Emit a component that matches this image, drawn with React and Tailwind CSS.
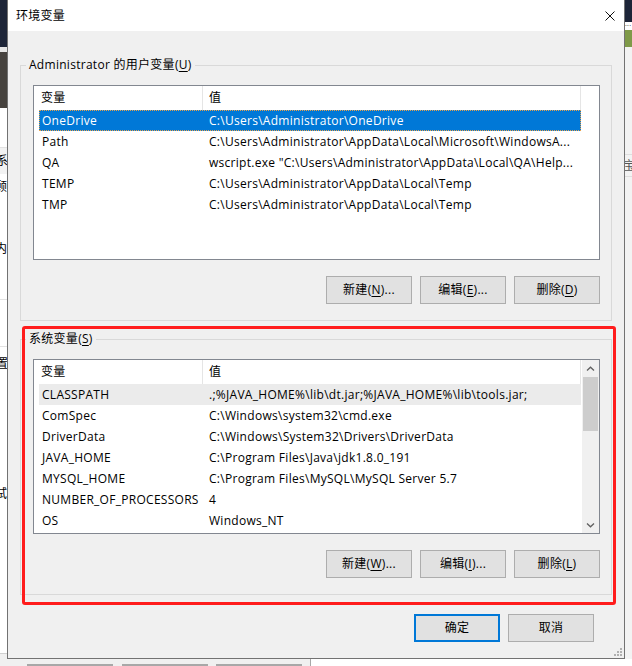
import React from 'react'

const font = "font-['Open_Sans','Noto_Sans_CJK_SC',sans-serif]"

const userVars = [
  { name: 'OneDrive', value: 'C:\\Users\\Administrator\\OneDrive' },
  { name: 'Path', value: 'C:\\Users\\Administrator\\AppData\\Local\\Microsoft\\WindowsA...' },
  { name: 'QA', value: 'wscript.exe "C:\\Users\\Administrator\\AppData\\Local\\QA\\Help...' },
  { name: 'TEMP', value: 'C:\\Users\\Administrator\\AppData\\Local\\Temp' },
  { name: 'TMP', value: 'C:\\Users\\Administrator\\AppData\\Local\\Temp' },
]

const systemVars = [
  { name: 'CLASSPATH', value: '.;%JAVA_HOME%\\lib\\dt.jar;%JAVA_HOME%\\lib\\tools.jar;' },
  { name: 'ComSpec', value: 'C:\\Windows\\system32\\cmd.exe' },
  { name: 'DriverData', value: 'C:\\Windows\\System32\\Drivers\\DriverData' },
  { name: 'JAVA_HOME', value: 'C:\\Program Files\\Java\\jdk1.8.0_191' },
  { name: 'MYSQL_HOME', value: 'C:\\Program Files\\MySQL\\MySQL Server 5.7' },
  { name: 'NUMBER_OF_PROCESSORS', value: '4' },
  { name: 'OS', value: 'Windows_NT' },
]

const Key = ({ label, k, tail = '' }) => (
  <span>
    {label}(<u className="underline-offset-2">{k}</u>){tail}
  </span>
)

const Btn = ({ children, primary }) => (
  <div
    className={
      primary
        ? 'h-[28px] w-[86px] flex items-center justify-center bg-[#e1e1e1] border-2 border-[#0078d7]'
        : 'h-[28px] w-[86px] flex items-center justify-center bg-[#e1e1e1] border border-[#adadad]'
    }
  >
    {children}
  </div>
)

const Chevron = ({ down }) => (
  <svg width="9" height="6" viewBox="0 0 9 6">
    <path
      d={down ? 'M1 1.5 L4.5 4.8 L8 1.5' : 'M1 4.5 L4.5 1.2 L8 4.5'}
      fill="none"
      stroke="#606060"
      strokeWidth="1.3"
    />
  </svg>
)

const Scrollbar = () => (
  <div className="w-[17px] bg-[#f0f0f0] flex flex-col items-center">
    <div className="h-[17px] flex items-center justify-center"><Chevron /></div>
    <div className="w-[15px] h-[54px] bg-[#cdcdcd]" />
    <div className="flex-1" />
    <div className="h-[17px] flex items-center justify-center"><Chevron down /></div>
  </div>
)

const rowClass = {
  normal: 'ml-[5px] w-[542px] h-[21px] flex items-center border border-transparent',
  selected: 'ml-[5px] w-[542px] h-[21px] flex items-center bg-[#0078d7] text-white border border-dotted border-[#e8a24c]',
  soft: 'ml-[5px] w-[542px] h-[21px] flex items-center bg-[#ebebeb] border border-transparent',
}

const VarList = ({ rows, selected, soft, scroll }) => (
  <div className="h-[175px] border border-[#828790] bg-white flex">
    <div className="flex-1 flex flex-col min-w-0">
      <div className="h-[24px] flex shrink-0">
        <div className="w-[169px] border-r border-[#e5e5e5] pl-[7px] flex items-center">变量</div>
        <div className="w-[378px] border-r border-[#e5e5e5] pl-[6px] flex items-center">值</div>
      </div>
      {rows.map((r, i) => (
        <div
          key={r.name}
          className={i === selected ? rowClass.selected : i === soft ? rowClass.soft : rowClass.normal}
        >
          <div className="w-[163px] pl-[2px] whitespace-nowrap overflow-hidden">{r.name}</div>
          <div className="flex-1 pl-[6px] whitespace-nowrap overflow-hidden">{r.value}</div>
        </div>
      ))}
    </div>
    {scroll && <Scrollbar />}
  </div>
)

const Group = ({ title, children, className = '' }) => (
  <fieldset className={`border border-[#d9d9d9] p-0 ${className}`}>
    <legend className="ml-[5px] px-[3px] leading-[16px]">{title}</legend>
    <div className="pt-[12px] pl-[12px] pr-[11px] pb-[16px] flex flex-col">{children}</div>
  </fieldset>
)

// bits of the desktop peeking out around the dialog
const LeftStrip = () => (
  <div className="w-[7px] flex flex-col overflow-hidden bg-white">
    <div className="h-[47px] bg-[#1d2538] shrink-0" />
    <div className="h-[5px] bg-[#e6e6e6] shrink-0" />
    <div className="h-[56px] bg-[#46423e] shrink-0" />
    <div className="h-[40px] border-b border-[#e2e2e2] shrink-0" />
    <div className="h-[26px] bg-[#f2f2f2] flex items-center shrink-0"><span className="-ml-[4px]">系</span></div>
    <div className="h-[26px] flex items-center shrink-0"><span className="-ml-[5px]">顾</span></div>
    <div className="h-[36px] shrink-0" />
    <div className="h-[26px] flex items-center shrink-0"><span className="-ml-[5px]">内</span></div>
    <div className="h-[38px] border-b border-[#e2e2e2] shrink-0" />
    <div className="h-[47px] border-b border-[#e2e2e2] shrink-0" />
    <div className="h-[34px] flex items-center shrink-0"><span className="-ml-[4px]">置</span></div>
    <div className="h-[100px] shrink-0" />
    <div className="h-[26px] flex items-center shrink-0"><span className="-ml-[5px]">试</span></div>
    <div className="flex-1 border-b border-[#d0d0d0]" />
    <div className="h-[5px] bg-[#f0f0f0] shrink-0" />
  </div>
)

const RightStrip = () => (
  <div className="w-[7px] flex flex-col overflow-hidden bg-[#f3f3f3]">
    <div className="h-[22px] bg-[#1d2538] shrink-0" />
    <div className="h-[8px] bg-white text-[7px] leading-[8px] shrink-0">···</div>
    <div className="h-[17px] bg-[#7f9a48] shrink-0" />
    <div className="h-[108px] border-b border-[#dedede] shrink-0" />
    <div className="h-[22px] border-b border-[#dedede] flex items-center shrink-0"><span className="-ml-[2px] text-[#555]">宝</span></div>
    <div className="flex-1" />
  </div>
)

const BottomStrip = () => (
  <div className="h-[7px] flex bg-[#f0f0f0]">
    <div className="w-[27px]" />
    <div className="w-[86px] border-b-2 border-[#a8a8a8]" />
    <div className="w-[9px]" />
    <div className="w-[86px] border-b-2 border-[#a8a8a8]" />
    <div className="w-[8px]" />
    <div className="w-[86px] border-b-2 border-[#a8a8a8]" />
    <div className="w-[8px]" />
    <div className="flex-1 border-l border-[#a8a8a8] bg-white" />
  </div>
)

export default function App() {
  return (
    <div className={`w-[632px] h-[666px] overflow-hidden flex flex-col text-[12px] tracking-[0.28px] text-black ${font}`}>
      <div className="h-[659px] flex">
        <LeftStrip />
        <div className="w-[618px] border-x border-b border-[#727272] flex flex-col bg-[#f0f0f0]">
          {/* title bar */}
          <div className="h-[31px] bg-white flex items-center justify-between pl-[8px] pr-[9px] shrink-0">
            <span>环境变量</span>
            <svg width="10" height="10" viewBox="0 0 10 10">
              <path d="M0.5 0.5 L9.5 9.5 M9.5 0.5 L0.5 9.5" stroke="#111" strokeWidth="1" />
            </svg>
          </div>

          <div className="relative flex-1 flex flex-col px-[12px] pt-[26px]">
            <Group title={<Key label="Administrator 的用户变量" k="U" />}>
              <VarList rows={userVars} selected={0} />
              <div className="mt-[16px] flex justify-end gap-[8px]">
                <Btn><Key label="新建" k="N" tail="..." /></Btn>
                <Btn><Key label="编辑" k="E" tail="..." /></Btn>
                <Btn><Key label="删除" k="D" /></Btn>
              </div>
            </Group>

            <Group title={<Key label="系统变量" k="S" />} className="mt-[10px]">
              <VarList rows={systemVars} soft={0} scroll />
              <div className="mt-[16px] flex justify-end gap-[8px]">
                <Btn><Key label="新建" k="W" tail="..." /></Btn>
                <Btn><Key label="编辑" k="I" tail="..." /></Btn>
                <Btn><Key label="删除" k="L" /></Btn>
              </div>
            </Group>

            <div className="mt-[19px] flex justify-end gap-[8px] pr-[18px]">
              <Btn primary>确定</Btn>
              <Btn>取消</Btn>
            </div>

            {/* red annotation box */}
            <div className="absolute left-[14px] top-[295px] w-[594px] h-[279px] border-[3px] border-[#ff1c1c] rounded-[3px] pointer-events-none" />

            {/* resize grip */}
            <svg className="absolute right-[2px] bottom-[2px]" width="9" height="9" viewBox="0 0 9 9">
              <g fill="#b0b0b0">
                <rect x="7" y="1" width="2" height="2" />
                <rect x="7" y="4" width="2" height="2" />
                <rect x="4" y="4" width="2" height="2" />
                <rect x="7" y="7" width="2" height="2" />
                <rect x="4" y="7" width="2" height="2" />
                <rect x="1" y="7" width="2" height="2" />
              </g>
            </svg>
          </div>
        </div>
        <RightStrip />
      </div>
      <BottomStrip />
    </div>
  )
}
